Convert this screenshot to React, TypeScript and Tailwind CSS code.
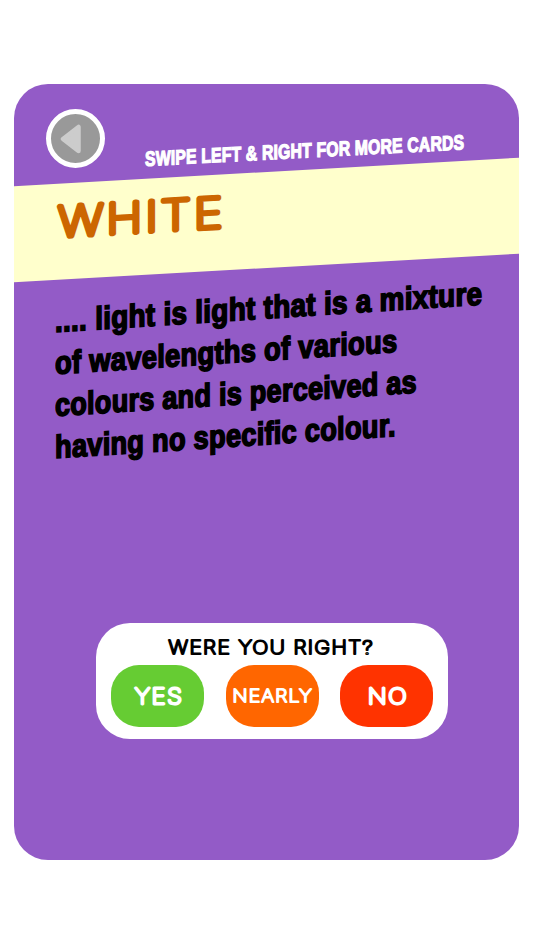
import { useLayoutEffect, useRef, useState } from 'react';

interface FitTextProps {
  text: string;
  width: number;
  className?: string;
}

// Squeezes a line of heavy text to a condensed width.
function FitText({ text, width, className = '' }: FitTextProps) {
  const ref = useRef<HTMLSpanElement>(null);
  const [scale, setScale] = useState(1);

  useLayoutEffect(() => {
    if (ref.current) setScale(width / ref.current.offsetWidth);
  }, [text, width]);

  return (
    <span
      ref={ref}
      className={`block w-max origin-left whitespace-nowrap ${className}`}
      style={{ transform: `scaleX(${scale})` }}
    >
      {text}
    </span>
  );
}

interface RoundedTextProps {
  text: string;
  width: number;
  height: number;
  weight: number;
  className?: string;
}

// Lettering with rounded ends: a hairline face with a round-joined stroke.
function RoundedText({ text, width, height, weight, className = '' }: RoundedTextProps) {
  return (
    <svg width={width} height={height} className={`block overflow-visible ${className}`}>
      <text
        x={weight / 4}
        y={height - weight / 2}
        textLength={width + weight / 4}
        lengthAdjust="spacingAndGlyphs"
        fontSize={(height - weight) / 0.727}
        fill="currentColor"
        stroke="currentColor"
        strokeWidth={weight}
        strokeLinejoin="round"
        strokeLinecap="round"
        className="font-['Inter',sans-serif] font-thin tracking-[0.07em]"
      >
        {text}
      </text>
    </svg>
  );
}

const definition = [
  { text: '.... light is light that is a mixture', width: 427 },
  { text: 'of wavelengths of various', width: 342 },
  { text: 'colours and is perceived as', width: 362 },
  { text: 'having no specific colour.', width: 341 },
];

export default function App() {
  return (
    <main className="h-[950px] w-[534px] overflow-hidden bg-white pt-[84px] pl-[14px]">
      <section className="flex h-[776px] w-[505px] flex-col overflow-hidden rounded-[34px] bg-[#935bc7]">
        <header className="flex h-[88px] shrink-0 items-start pt-[25px] pl-8">
          <button
            aria-label="Back"
            className="flex size-[59px] shrink-0 items-center justify-center rounded-full border-[5px] border-white bg-[#999]"
          >
            <svg width="22" height="30" viewBox="0 0 22 30" className="-ml-[9px]">
              <path
                d="M3 15 L18.5 3 V27 Z"
                fill="#ccc"
                stroke="#ccc"
                strokeWidth="4.5"
                strokeLinejoin="round"
              />
            </svg>
          </button>
          <div className="mt-[37.5px] ml-[40px] origin-bottom-left -skew-y-[3deg]">
            <FitText
              text="SWIPE LEFT & RIGHT FOR MORE CARDS"
              width={319}
              className="font-['Liberation_Sans',sans-serif] text-[20.5px] leading-[24px] font-bold tracking-[0.2px] text-white [-webkit-text-stroke:1.2px_white]"
            />
          </div>
        </header>

        <div className="h-24 shrink-0 -skew-y-[3.23deg] bg-[#ffc]">
          <h1 className="pt-[20px] pl-[43px] text-[#c60]">
            <RoundedText text="WHITE" width={166} height={35.5} weight={5.2} />
          </h1>
        </div>

        <div className="mt-[31.5px] ml-[41px] w-[430px] origin-top-left -skew-y-[3.7deg]">
          {definition.map((line) => (
            <FitText
              key={line.text}
              text={line.text}
              width={line.width}
              className="font-['Liberation_Sans',sans-serif] text-[32px] leading-[42px] font-bold tracking-[0.3px] text-black [-webkit-text-stroke:1.7px_black]"
            />
          ))}
        </div>

        <div className="mt-auto mb-[121px] ml-[82px] h-[116px] w-[352px] rounded-[34px] bg-white pt-[17px]">
          <div className="flex justify-center pr-[3px] text-black">
            <RoundedText text="WERE YOU RIGHT?" width={205} height={15.5} weight={2.2} />
          </div>
          <div className="mt-[9.5px] flex justify-between px-[15px] text-white">
            <button className="flex h-[61.5px] w-[93px] items-center justify-center rounded-[28px] bg-[#6c3]">
              <RoundedText text="YES" width={48} height={18.5} weight={2.8} />
            </button>
            <button className="flex h-[61.5px] w-[93px] items-center justify-center rounded-[28px] bg-[#f60]">
              <RoundedText text="NEARLY" width={80} height={14.5} weight={2.1} />
            </button>
            <button className="flex h-[61.5px] w-[93px] items-center justify-center rounded-[28px] bg-[#f30]">
              <RoundedText text="NO" width={40} height={18.5} weight={2.8} />
            </button>
          </div>
        </div>
      </section>
    </main>
  );
}
